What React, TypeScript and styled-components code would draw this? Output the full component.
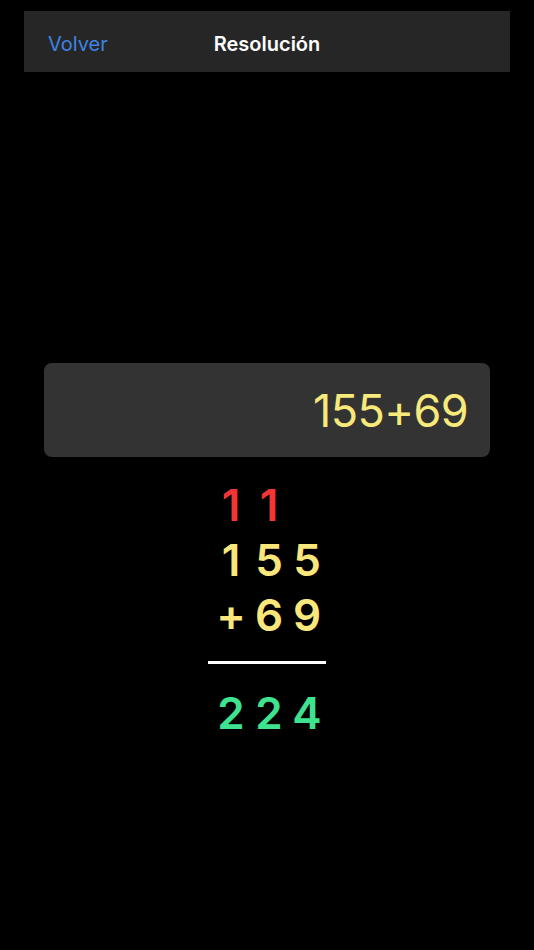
import React from "react";
import styled, { createGlobalStyle } from "styled-components";

const Global = createGlobalStyle`
  html, body { margin: 0; padding: 0; background: #000; }
  body { font-family: Inter, "Noto Sans", sans-serif; -webkit-font-smoothing: antialiased; }
`;

const Page = styled.div`
  width: 534px;
  min-height: 950px;
  background: #000;
  display: flex;
  flex-direction: column;
  padding-top: 11px;
  box-sizing: border-box;
`;

const NavBar = styled.div`
  margin: 0 24px;
  height: 61px;
  box-sizing: border-box;
  background: #262626;
  display: grid;
  grid-template-columns: 1fr auto 1fr;
  align-items: center;
  padding: 4px 24px 0;
`;

const BackButton = styled.span`
  color: #3d84e2;
  font-size: 20px;
  font-weight: 400;
  justify-self: start;
`;

const Title = styled.span`
  color: #fff;
  font-size: 20px;
  font-weight: 600;
`;

const Display = styled.div`
  margin: 291px 44px 0;
  height: 94px;
  border-radius: 8px;
  background: #333333;
  display: flex;
  align-items: center;
  justify-content: flex-end;
  padding-right: 22px;
  color: #f7e97a;
  font-size: 45px;
  font-weight: 400;
  letter-spacing: -0.6px;
`;

const Work = styled.div`
  align-self: center;
  width: 118px;
  margin-top: 20px;
  display: flex;
  flex-direction: column;
`;

const Row = styled.div<{ $color: string }>`
  display: grid;
  grid-template-columns: repeat(3, 38px);
  justify-content: end;
  height: 55px;
  align-items: center;
  color: ${(p) => p.$color};
  font-size: 44px;
  font-weight: 600;
`;

const Cell = styled.span`
  text-align: center;
  line-height: 1;
`;

const Rule = styled.div`
  height: 3px;
  background: #fff;
  margin: 19px 0 21px;
`;

const RED = "#f53434";
const YELLOW = "#f9e77b";
const GREEN = "#3fe28f";

const DigitRow = ({ cells, color }: { cells: string[]; color: string }) => (
  <Row $color={color}>
    {cells.map((c, i) => (
      <Cell key={i}>{c}</Cell>
    ))}
  </Row>
);

export default function App() {
  return (
    <>
      <Global />
      <Page>
        <NavBar>
          <BackButton>Volver</BackButton>
          <Title>Resolución</Title>
          <span />
        </NavBar>
        <Display>155+69</Display>
        <Work>
          <DigitRow cells={["1", "1", ""]} color={RED} />
          <DigitRow cells={["1", "5", "5"]} color={YELLOW} />
          <DigitRow cells={["+", "6", "9"]} color={YELLOW} />
          <Rule />
          <DigitRow cells={["2", "2", "4"]} color={GREEN} />
        </Work>
      </Page>
    </>
  );
}
